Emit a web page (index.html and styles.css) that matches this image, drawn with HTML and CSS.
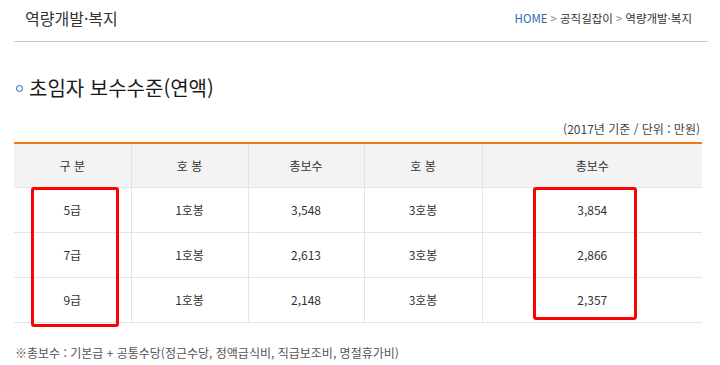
FILE: index.html
```html
<!DOCTYPE html>
<html lang="ko">
<head>
<meta charset="utf-8">
<title>역량개발·복지</title>
<link rel="stylesheet" href="styles.css">
</head>
<body>
<div class="page">
  <header class="top">
    <h1 class="page-title">역량개발·복지</h1>
    <nav class="crumbs">
      <span class="home">HOME</span>
      <span class="sep">&gt;</span>
      <span>공직길잡이</span>
      <span class="sep">&gt;</span>
      <span>역량개발·복지</span>
    </nav>
  </header>

  <h2 class="sec-title"><span class="bullet"></span>초임자 보수수준(연액)</h2>

  <p class="unit">(2017년 기준 / 단위 : 만원)</p>

  <div class="table-wrap">
    <table class="pay">
      <colgroup>
        <col class="c1"><col class="c2"><col class="c3"><col class="c4"><col class="c5">
      </colgroup>
      <thead>
        <tr><th>구 분</th><th>호 봉</th><th>총보수</th><th>호 봉</th><th>총보수</th></tr>
      </thead>
      <tbody>
        <tr><td>5급</td><td>1호봉</td><td>3,548</td><td>3호봉</td><td>3,854</td></tr>
        <tr><td>7급</td><td>1호봉</td><td>2,613</td><td>3호봉</td><td>2,866</td></tr>
        <tr><td>9급</td><td>1호봉</td><td>2,148</td><td>3호봉</td><td>2,357</td></tr>
      </tbody>
    </table>
    <div class="mark mark-left"></div>
    <div class="mark mark-right"></div>
  </div>

  <p class="note">※총보수 : 기본급 + 공통수당(정근수당, 정액급식비, 직급보조비, 명절휴가비)</p>
</div>
</body>
</html>
```

FILE: styles.css
```css
* { box-sizing: border-box; }
html, body { margin: 0; padding: 0; background: #fff; }
body {
  font-family: "Noto Sans CJK KR", "Noto Sans", sans-serif;
  color: #333;
  width: 720px;
  height: 365px;
  overflow: hidden;
}
.page { padding: 0 18px 0 14px; }

.top {
  display: flex;
  justify-content: space-between;
  align-items: center;
  height: 42px;
  border-bottom: 1px solid #c8c8c8;
  margin-right: -6px;
}
.page-title {
  margin: 0;
  font-size: 16px;
  font-weight: 400;
  color: #333;
  line-height: 1;
  padding-left: 11px;
  position: relative;
  top: -3px;
}
.crumbs {
  display: flex;
  gap: 3px;
  font-size: 11.5px;
  color: #333;
  padding-right: 16px;
  position: relative;
  top: -3px;
}
.crumbs .home { color: #2d6db0; }
.crumbs .sep { color: #888; }

.sec-title {
  margin: 34px 0 0 0;
  display: flex;
  align-items: center;
  gap: 6px;
  font-size: 20px;
  font-weight: 400;
  color: #1a1a1a;
  line-height: 24px;
}
.bullet {
  width: 7px;
  height: 7px;
  border: 1.5px solid #1f5fa8;
  border-radius: 50%;
  margin-left: 2px;
}

.unit {
  margin: 21px 0 0 0;
  text-align: right;
  font-size: 12px;
  color: #444;
  line-height: 16px;
  padding-right: 2px;
}

.table-wrap {
  position: relative;
  margin-top: 5px;
  width: 688px;
}
.pay {
  width: 688px;
  border-collapse: collapse;
  table-layout: fixed;
  border-top: 2px solid #ee7a1c;
  font-size: 12px;
  color: #333;
}
.c1 { width: 117px; }
.c2 { width: 117px; }
.c3 { width: 116px; }
.c4 { width: 118px; }
.c5 { width: 220px; }
.pay th, .pay td {
  text-align: center;
  border-bottom: 1px solid #e4e4e4;
  border-left: 1px solid #e4e4e4;
  padding: 0;
  font-weight: 400;
}
.pay th:first-child, .pay td:first-child { border-left: 0; }
.pay th {
  height: 44px;
  background: #f3f3f3;
}
.pay td { height: 45px; }

.mark {
  position: absolute;
  border: 3px solid #ff0000;
  border-radius: 3px;
}
.mark-left { left: 17px; top: 45px; width: 88px; height: 140px; }
.mark-right { left: 519px; top: 45px; width: 104px; height: 133px; }

.note {
  margin: 22px 0 0 1px;
  font-size: 12px;
  color: #555;
  line-height: 16px;
}
```
